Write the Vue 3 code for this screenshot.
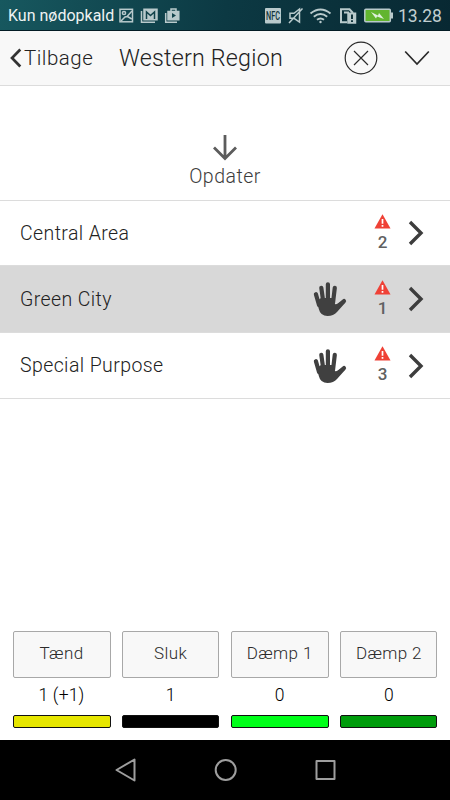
<template>
  <div class="screen">
    <!-- Android status bar -->
    <div class="status-bar">
      <span class="carrier">Kun nødopkald</span>
      <svg class="status-icons left" width="64" height="20" viewBox="0 0 64 20" fill="none" stroke="#b9cacc" stroke-width="1.5">
        <rect x="2" y="3.3" width="12.5" height="12.5" />
        <circle cx="6" cy="7" r="1.6" />
        <path d="M3 15L7 11L9 10.5L14 5M9.5 10.5L13.8 13" />
        <path d="M23.5 5V16.3H37" />
        <path d="M26 3.2H39V13.8H26Z" fill="#b9cacc" />
        <path d="M28.5 13V6L32.5 9.5L36.5 6V13" stroke="#12434b" />
        <path d="M47.7 7V16.2H59" />
        <path d="M50 5.5H60.8V13.7H50Z" fill="#b9cacc" />
        <path d="M53 5V3H58V5" />
        <path d="M54 7V12L58 9.5Z" fill="#12434b" stroke="none" />
      </svg>
      <svg class="status-icons right" width="130" height="20" viewBox="0 0 130 20" fill="none" stroke="#b9cacc" stroke-width="1.5">
        <rect x="0" y="2" width="16" height="15.5" rx="1" fill="#b9cacc" stroke="none" />
        <text class="nfc" x="8" y="14.3" text-anchor="middle" textLength="14" lengthAdjust="spacingAndGlyphs">NFC</text>
        <path d="M25 7.3H29L34.5 3V16L29 12.3H25Z M24 17L37.5 2.5" />
        <g stroke-width="2">
          <path d="M45.5 7.5Q55.5-.5 65.5 7.5M48.8 10.7Q55.5 5.4 62.2 10.7M52 13.8Q55.5 11.2 59 13.8" />
          <circle cx="55.5" cy="16" r="1.2" fill="#b9cacc" stroke="none" />
        </g>
        <path d="M82 16.3H76V3.3H84.5L88 7M79 6.5H84" stroke-width="2" />
        <path d="M83 7.3H90.5V17H83Z" fill="#b9cacc" />
        <path d="M87 8.5V13M87 14.3V16" stroke="#12343c" stroke-width="2" />
        <rect x="99.8" y="3.2" width="25.5" height="12.6" rx="1" fill="#62b52f" />
        <path d="M127 6.5V12.5" stroke-width="2" />
        <path d="M106 6L113 9.5L114 7L119 13L112 10.5L111 12.5Z" fill="#dff0dc" stroke="none" />
      </svg>
      <span class="clock">13.28</span>
    </div>

    <!-- Header -->
    <header class="header">
      <svg class="back-icon" width="12" height="20" viewBox="0 0 12 20">
        <path d="M10.3 1.5L2 10L10.3 18.5" fill="none" stroke="#333" stroke-width="2.7" />
      </svg>
      <span class="back">Tilbage</span>
      <h1 class="title">Western Region</h1>
      <svg class="close" width="34" height="34" viewBox="0 0 34 34" fill="none" stroke="#2a2a2a" stroke-width="1.2">
        <circle cx="17" cy="17" r="15.8" />
        <path d="M10 10L24 24M24 10L10 24" />
      </svg>
      <svg class="expand" width="26" height="16" viewBox="0 0 26 16">
        <path d="M1.2 1.5L13 14L24.8 1.5" fill="none" stroke="#2a2a2a" stroke-width="1.7" />
      </svg>
    </header>

    <!-- Refresh -->
    <div class="refresh">
      <svg width="26" height="26" viewBox="0 0 26 26">
        <path d="M13 0V23M2 12.5L13 23.5L24 12.5" fill="none" stroke="#5c5c5c" stroke-width="2.8" />
      </svg>
      <span class="refresh-text">Opdater</span>
    </div>

    <!-- Areas -->
    <div class="area-list">
      <div v-for="area in areas" :key="area.name" :class="['area', { selected: area.selected }]">
        <span class="area-name">{{ area.name }}</span>
        <svg v-if="area.manual" class="hand" width="34" height="36" viewBox="0 0 34 36">
          <path d="M2.9 13.2L6 24M8.3 6.8L10.3 21M14.9 3.3V21M21.8 6.8L20 22M31 20L22 27.5" fill="none" stroke="#404040" stroke-width="4.2" stroke-linecap="round" />
          <path d="M4 20L8 17H21.5L21.3 22.5Q22.5 24.5 26 21.7L31 20L32.5 21.5L24 31Q20.5 35 14.5 35Q7.5 35 5.8 28Z" fill="#404040" />
        </svg>
        <div class="alarm">
          <svg width="17" height="15" viewBox="0 0 17 15">
            <path d="M8.5 .3L16.5 14.5H.5Z" fill="#ef4136" />
            <path d="M8.5 5V9.7M8.5 11V12.7" stroke="#fff" stroke-width="1.7" />
          </svg>
          <span class="alarm-count">{{ area.alarms }}</span>
        </div>
        <svg class="arrow" width="16" height="26" viewBox="0 0 16 26">
          <path d="M2 2L13 13L2 24" fill="none" stroke="#3d3d3d" stroke-width="3.4" />
        </svg>
      </div>
    </div>

    <!-- Light commands -->
    <div class="commands">
      <div v-for="command in commands" :key="command.label" class="command">
        <button class="command-button">{{ command.label }}</button>
        <span class="command-count">{{ command.count }}</span>
        <div :class="['command-bar', command.color]"></div>
      </div>
    </div>

    <!-- Android navigation -->
    <nav class="nav-bar">
      <svg width="450" height="60" viewBox="0 0 450 60" fill="none" stroke="#9e9e9e" stroke-width="2" stroke-linejoin="round">
        <path d="M116.5 30L134.5 19.5V40.5Z" />
        <circle cx="225.7" cy="30" r="10" />
        <rect x="316.5" y="21" width="18" height="18" />
      </svg>
    </nav>
  </div>
</template>

<script setup>
import { ref } from 'vue'

const areas = ref([
  { name: 'Central Area', alarms: 2, manual: false, selected: false },
  { name: 'Green City', alarms: 1, manual: true, selected: true },
  { name: 'Special Purpose', alarms: 3, manual: true, selected: false }
])

const commands = ref([
  { label: 'Tænd', count: '1 (+1)', color: 'yellow' },
  { label: 'Sluk', count: '1', color: 'black' },
  { label: 'Dæmp 1', count: '0', color: 'lime' },
  { label: 'Dæmp 2', count: '0', color: 'green' }
])
</script>

<style>
body {
  margin: 0;
  background: #fff;
}
</style>

<style scoped>
.screen {
  width: 450px;
  height: 800px;
  display: flex;
  flex-direction: column;
  overflow: hidden;
  background: #fff;
  font-family: Roboto, sans-serif;
  color: #222;
}

.screen svg {
  display: block;
  flex: none;
}

/* Status bar */
.status-bar {
  height: 31px;
  flex: none;
  box-sizing: border-box;
  padding: 1px 8px 0;
  display: flex;
  align-items: center;
  border-bottom: 1px solid #031c25;
  background: linear-gradient(100deg, #17585f, #0c3943 50%, #082832);
}

.carrier {
  width: 109px;
  color: #eef3f3;
  font-size: 16px;
  white-space: nowrap;
}

.status-icons.left {
  margin-left: 1px;
}

.status-icons.right {
  margin-left: 83px;
}

.nfc {
  fill: #12343c;
  stroke: none;
  font-size: 12px;
  font-weight: 500;
}

.clock {
  margin-left: 3px;
  color: #c1cfd1;
  font-size: 17.5px;
}

/* Header */
.header {
  height: 55px;
  flex: none;
  box-sizing: border-box;
  padding: 0 20px 0 10px;
  display: flex;
  align-items: center;
  border-bottom: 1px solid #dcdcdc;
  background: #f8f8f8;
}

.back {
  width: 95px;
  margin-left: 2px;
  font-size: 20.5px;
  font-weight: 300;
  letter-spacing: 0.5px;
}

.title {
  width: 225px;
  margin: 0;
  font-size: 23.3px;
  font-weight: 300;
  letter-spacing: 0.2px;
  white-space: nowrap;
}

.expand {
  margin-left: 26px;
}

/* Refresh */
.refresh {
  height: 115px;
  flex: none;
  box-sizing: border-box;
  padding-top: 49px;
  display: flex;
  flex-direction: column;
  align-items: center;
  border-bottom: 1px solid #dcdcdc;
  color: #3c3c3c;
}

.refresh-text {
  margin-top: 4px;
  font-size: 19.5px;
  font-weight: 300;
  line-height: 24px;
  letter-spacing: 0.5px;
}

/* Areas */
.area {
  height: 66px;
  box-sizing: border-box;
  padding: 0 27px 0 20px;
  display: flex;
  align-items: center;
  border-bottom: 1px solid #dcdcdc;
}

.area:first-child {
  height: 65px;
}

.area.selected {
  height: 67px;
  background: #d8d8d8;
}

.area-name {
  flex: 1;
  font-size: 19.5px;
  font-weight: 300;
  letter-spacing: 0.4px;
}

.hand {
  margin-right: 27px;
}

.alarm {
  width: 17px;
  margin-right: 17px;
  display: flex;
  flex-direction: column;
  align-items: center;
}

.alarm-count {
  margin-top: 2px;
  color: #606060;
  font-size: 17px;
  font-weight: 500;
  line-height: 22px;
}

.arrow {
  margin-right: -1px;
}

/* Commands */
.commands {
  margin-top: auto;
  padding: 0 12.5px 12px;
  display: grid;
  grid-template-columns: 98px 97px 98px 97px;
  justify-content: space-between;
}

.command {
  display: flex;
  flex-direction: column;
  text-align: center;
}

.command-button {
  height: 47px;
  padding: 0 0 3px;
  border: 1px solid #a8a8a8;
  border-radius: 2px;
  background: #f8f8f8;
  color: #2b2b2b;
  font-family: inherit;
  font-size: 17px;
  font-weight: 300;
  letter-spacing: 0.4px;
}

.command-count {
  height: 37px;
  color: #000;
  font-size: 17.5px;
  font-weight: 300;
  line-height: 35px;
  letter-spacing: 0.2px;
}

.command-bar {
  height: 13px;
  box-sizing: border-box;
  border: 1px solid #111;
  border-radius: 2px;
}

.command-bar.yellow {
  background: #e6e600;
}

.command-bar.black {
  background: #000;
}

.command-bar.lime {
  background: #00ff19;
}

.command-bar.green {
  background: #009c0c;
}

/* Navigation */
.nav-bar {
  height: 60px;
  flex: none;
  background: #000;
}
</style>
